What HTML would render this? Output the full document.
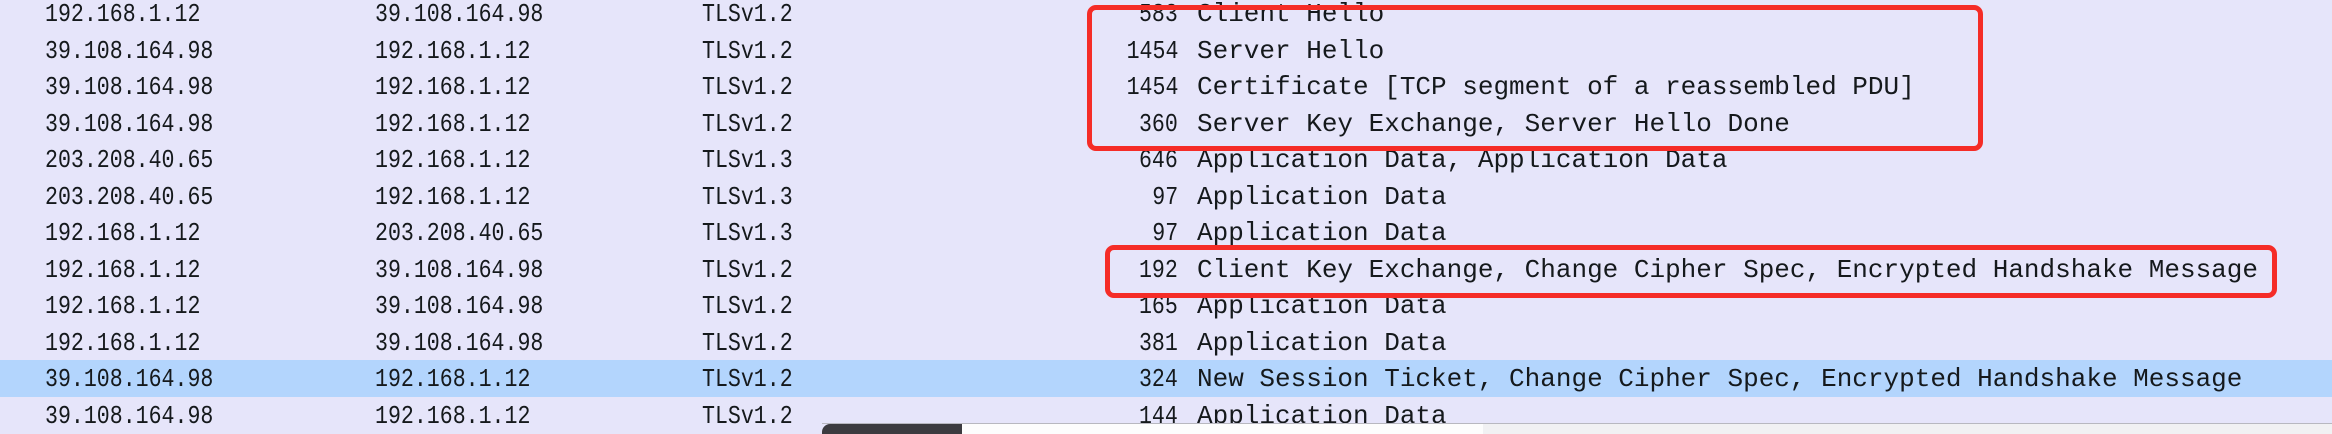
<!DOCTYPE html><html><head><style>
body{margin:0;width:2332px;height:434px;overflow:hidden;background:#e6e5fa;position:relative;font-family:"Liberation Mono",monospace;font-size:26px;color:#15191c}
.r{position:absolute;left:0;width:2332px;height:36.5px}
.r span{position:absolute;top:4px;line-height:30px;white-space:pre;transform:scaleX(0.83);transform-origin:left center}
.r span.n{transform-origin:right center;text-align:right;right:1154px}
.r span.i{left:1197px;transform:scaleX(1.0)}
.hl{background:#b3d5fd}
.box{position:absolute;border:5px solid #f52c27;border-radius:9px;box-sizing:border-box}
</style></head><body>
<div class="r" style="top:-5px"><span style="left:45px">192.168.1.12</span><span style="left:375px">39.108.164.98</span><span style="left:702px">TLSv1.2</span><span class="n">583</span><span class="i">Client Hello</span></div>
<div class="r" style="top:31.5px"><span style="left:45px">39.108.164.98</span><span style="left:375px">192.168.1.12</span><span style="left:702px">TLSv1.2</span><span class="n">1454</span><span class="i">Server Hello</span></div>
<div class="r" style="top:68px"><span style="left:45px">39.108.164.98</span><span style="left:375px">192.168.1.12</span><span style="left:702px">TLSv1.2</span><span class="n">1454</span><span class="i">Certificate [TCP segment of a reassembled PDU]</span></div>
<div class="r" style="top:104.5px"><span style="left:45px">39.108.164.98</span><span style="left:375px">192.168.1.12</span><span style="left:702px">TLSv1.2</span><span class="n">360</span><span class="i">Server Key Exchange, Server Hello Done</span></div>
<div class="r" style="top:141px"><span style="left:45px">203.208.40.65</span><span style="left:375px">192.168.1.12</span><span style="left:702px">TLSv1.3</span><span class="n">646</span><span class="i">Application Data, Application Data</span></div>
<div class="r" style="top:177.5px"><span style="left:45px">203.208.40.65</span><span style="left:375px">192.168.1.12</span><span style="left:702px">TLSv1.3</span><span class="n">97</span><span class="i">Application Data</span></div>
<div class="r" style="top:214px"><span style="left:45px">192.168.1.12</span><span style="left:375px">203.208.40.65</span><span style="left:702px">TLSv1.3</span><span class="n">97</span><span class="i">Application Data</span></div>
<div class="r" style="top:250.5px"><span style="left:45px">192.168.1.12</span><span style="left:375px">39.108.164.98</span><span style="left:702px">TLSv1.2</span><span class="n">192</span><span class="i">Client Key Exchange, Change Cipher Spec, Encrypted Handshake Message</span></div>
<div class="r" style="top:287px"><span style="left:45px">192.168.1.12</span><span style="left:375px">39.108.164.98</span><span style="left:702px">TLSv1.2</span><span class="n">165</span><span class="i">Application Data</span></div>
<div class="r" style="top:323.5px"><span style="left:45px">192.168.1.12</span><span style="left:375px">39.108.164.98</span><span style="left:702px">TLSv1.2</span><span class="n">381</span><span class="i">Application Data</span></div>
<div class="r hl" style="top:360px"><span style="left:45px">39.108.164.98</span><span style="left:375px">192.168.1.12</span><span style="left:702px">TLSv1.2</span><span class="n">324</span><span class="i">New Session Ticket, Change Cipher Spec, Encrypted Handshake Message</span></div>
<div class="r" style="top:396.5px"><span style="left:45px">39.108.164.98</span><span style="left:375px">192.168.1.12</span><span style="left:702px">TLSv1.2</span><span class="n">144</span><span class="i">Application Data</span></div>
<div class="box" style="left:1087px;top:5px;width:896px;height:146px"></div>
<div class="box" style="left:1105px;top:245px;width:1172px;height:53px"></div>
<div style="position:absolute;left:822px;top:423px;width:1510px;height:1px;background:#b8b8c0"></div>
<div style="position:absolute;left:822px;top:424px;width:140px;height:10px;background:#3c3b40;border-top-left-radius:8px"></div>
<div style="position:absolute;left:962px;top:424px;width:521px;height:10px;background:#fdfdfd"></div>
<div style="position:absolute;left:1483px;top:424px;width:849px;height:10px;background:#f1f1f3"></div>
</body></html>
